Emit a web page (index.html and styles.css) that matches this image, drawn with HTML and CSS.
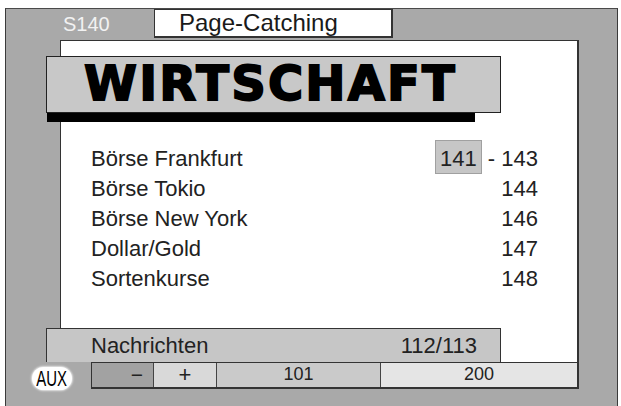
FILE: index.html
```html
<!DOCTYPE html>
<html lang="de">
<head>
<meta charset="utf-8">
<title>Page-Catching</title>
<link rel="stylesheet" href="styles.css">
</head>
<body>
<div class="frame">
  <div class="header">
    <div class="pagenum">S140</div>
    <div class="titlebox">Page-Catching</div>
  </div>
  <div class="panel">
    <div class="banner">WIRTSCHAFT</div>
    <div class="banner-shadow"></div>
    <ul class="list">
      <li class="row"><span class="name">Börse Frankfurt</span><span class="num"><span class="sel">141</span> - 143</span></li>
      <li class="row"><span class="name">Börse Tokio</span><span class="num">144</span></li>
      <li class="row"><span class="name">Börse New York</span><span class="num">146</span></li>
      <li class="row"><span class="name">Dollar/Gold</span><span class="num">147</span></li>
      <li class="row"><span class="name">Sortenkurse</span><span class="num">148</span></li>
    </ul>
    <div class="newsbar"><span>Nachrichten</span><span>112/113</span></div>
  </div>
  <div class="footer">
    <div class="aux"><span class="aux-text">AUX</span></div>
    <div class="segs">
      <div class="seg seg-minus">−</div>
      <div class="seg seg-plus">+</div>
      <div class="seg seg-a">101</div>
      <div class="seg seg-b">200</div>
    </div>
  </div>
</div>
</body>
</html>
```

FILE: styles.css
```css
html, body {
  margin: 0;
  padding: 0;
  background: #ffffff;
}
body {
  width: 621px;
  height: 406px;
  overflow: hidden;
  font-family: "Liberation Sans", Arial, sans-serif;
  color: #222222;
}
.frame {
  box-sizing: border-box;
  margin: 8px 3px 0 5px;
  height: 398px;
  background: #a9a9a9;
  border-top: 1px solid #4a4a4a;
  border-left: 1px solid #3a3a3a;
  border-right: 1px solid #3a3a3a;
  display: flex;
  flex-direction: column;
}
.header {
  height: 31px;
  display: flex;
  align-items: flex-start;
  padding-left: 57px;
}
.pagenum {
  width: 91px;
  font-size: 20px;
  line-height: 26px;
  padding-top: 2px;
  color: #f2f2f2;
}
.titlebox {
  box-sizing: border-box;
  width: 239px;
  height: 29px;
  background: #ffffff;
  border: 1px solid #333;
  border-right-width: 2px;
  border-bottom-width: 2px;
  padding-left: 24px;
  font-size: 24px;
  line-height: 26px;
  color: #1a1a1a;
}
.panel {
  box-sizing: border-box;
  margin-left: 54px;
  width: 519px;
  height: 322px;
  background: #ffffff;
  border-top: 1px solid #333;
  border-left: 1px solid #333;
  border-right: 2px solid #333;
  display: flex;
  flex-direction: column;
}
.banner {
  box-sizing: border-box;
  margin: 15px 0 0 -15px;
  width: 455px;
  height: 57px;
  background: #c8c8c8;
  border: 1px solid #222;
  padding-left: 37px;
  font-family: "DejaVu Sans", "Liberation Sans", sans-serif;
  font-weight: bold;
  font-size: 48px;
  line-height: 53px;
  letter-spacing: 2.2px;
  color: #000;
  -webkit-text-stroke: 1.8px #000;
}
.banner-shadow {
  margin-left: -14px;
  width: 428px;
  height: 9px;
  background: #000;
}
.list {
  list-style: none;
  margin: 22px 39px 0 30px;
  padding: 0;
}
.row {
  display: flex;
  justify-content: space-between;
  font-size: 22px;
  line-height: 30px;
  height: 30px;
}
.sel {
  background: #c6c6c6;
  border: 1px solid #a0a0a0;
  padding: 5px 4px 2px 4px;
}
.newsbar {
  box-sizing: border-box;
  margin: auto 0 0 -15px;
  width: 455px;
  height: 34px;
  background: #c6c6c6;
  border: 1px solid #333;
  border-bottom: none;
  display: flex;
  justify-content: space-between;
  padding: 0 23px 0 44px;
  font-size: 22px;
  line-height: 33px;
}
.footer {
  height: 27px;
  display: flex;
  align-items: flex-start;
}
.aux {
  margin: 5px 0 0 26px;
  width: 40px;
  height: 23px;
  border-radius: 12px;
  background: #ffffff;
  box-shadow: 0 0 2px 1px rgba(255, 255, 255, 0.7);
  display: flex;
  align-items: center;
  justify-content: center;
}
.aux-text {
  display: inline-block;
  font-size: 22px;
  line-height: 23px;
  color: #000;
  transform: scaleX(0.68);
}
.segs {
  box-sizing: border-box;
  margin-left: 19px;
  width: 488px;
  height: 27px;
  display: flex;
  border: 1px solid #333;
  border-right-width: 2px;
  border-bottom-width: 2px;
}
.seg {
  box-sizing: border-box;
  height: 24px;
  font-size: 18px;
  line-height: 23px;
  color: #222;
  text-align: center;
  border-right: 1px solid #444;
}
.seg-minus {
  width: 62px;
  background: #a2a2a2;
  text-align: right;
  padding-right: 10px;
  font-size: 21px;
}
.seg-plus {
  width: 63px;
  background: #d9d9d9;
  font-size: 22px;
}
.seg-a {
  width: 164px;
  background: #cacaca;
}
.seg-b {
  flex: 1;
  background: #e5e5e5;
  border-right: none;
}
```
